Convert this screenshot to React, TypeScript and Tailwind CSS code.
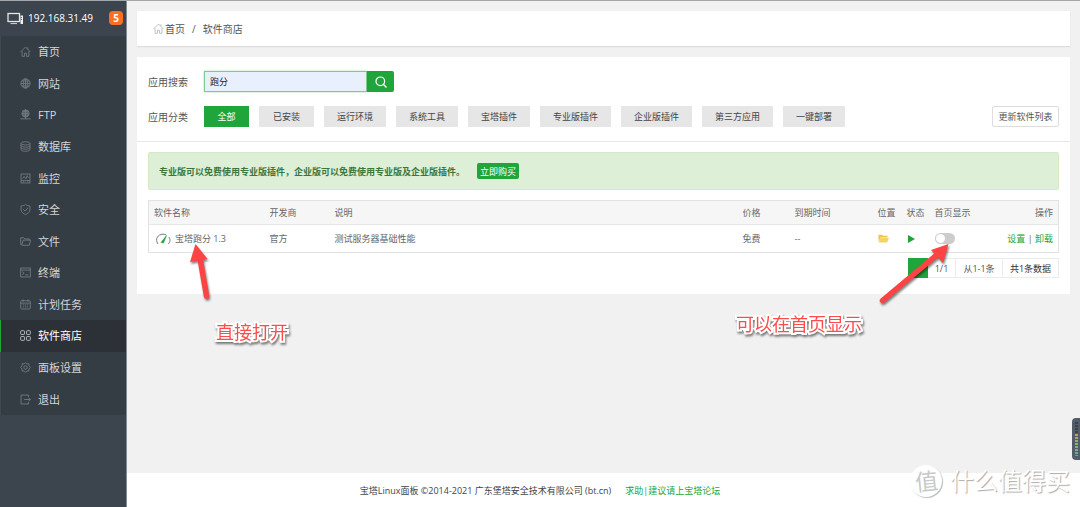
import type { ReactNode } from "react";
import clsx from "clsx";

type MenuItem = {
  label: string;
  icon: ReactNode;
  active?: boolean;
};

const Icon = ({ children }: { children: ReactNode }) => (
  <svg
    viewBox="0 0 16 16"
    className="size-[11px] shrink-0"
    fill="none"
    stroke="currentColor"
    strokeWidth="1.3"
    aria-hidden="true"
  >
    {children}
  </svg>
);

const HomeIcon = () => (
  <Icon>
    <path d="M1 8.5 8 1.5l7 7M11.5 2v3" />
    <path d="M3 7.5V15h3.5v-4.500h3V15H13V7.500" />
  </Icon>
);

const menu: MenuItem[] = [
  { label: "首页", icon: <HomeIcon /> },
  {
    label: "网站",
    icon: (
      <Icon>
        <circle cx="8" cy="8" r="6.700" />
        <ellipse cx="8" cy="8" rx="3.200" ry="6.700" />
        <path d="M1.300 8h13.400M2.500 4.500h11M2.500 11.500h11M8 1.300v13.400" />
      </Icon>
    ),
  },
  {
    label: "FTP",
    icon: (
      <Icon>
        <circle cx="8" cy="6.500" r="5.300" />
        <ellipse cx="8" cy="6.500" rx="2.500" ry="5.300" />
        <path d="M2.700 6.500h10.600M3.500 4h9M3.500 9h9M8 1v13M0.500 14.300h15" />
      </Icon>
    ),
  },
  {
    label: "数据库",
    icon: (
      <Icon>
        <ellipse cx="8" cy="3.500" rx="6.500" ry="2.400" />
        <path d="M1.500 3.500v9c0 3.200 13 3.200 13 0v-9M1.500 6.500c0 3.200 13 3.200 13 0M1.500 9.500c0 3.200 13 3.200 13 0" />
      </Icon>
    ),
  },
  {
    label: "监控",
    icon: (
      <Icon>
        <rect x="1.500" y="1.500" width="13" height="13" />
        <path d="M4 8l2-3 2.500 3.500L10.500 4l2 3M1.500 11h13M4 13h2M10 13h2" />
      </Icon>
    ),
  },
  {
    label: "安全",
    icon: (
      <Icon>
        <path d="M8 .8c2 1.400 4.500 2 6.500 2V8c0 3.500-3 6-6.500 7.300C4.500 14 1.500 11.500 1.500 8V2.800c2 0 4.500-.6 6.500-2z" />
        <path d="m4.500 7.500 2.800 2.800 4.500-4.800" />
      </Icon>
    ),
  },
  {
    label: "文件",
    icon: (
      <Icon>
        <path d="M3 13.500h10.500l2-7.500H4.500L2.500 13.500 1 12V2.500h4.500L7 4.300h6.500V6" />
      </Icon>
    ),
  },
  {
    label: "终端",
    icon: (
      <Icon>
        <rect x="1" y="1.500" width="14" height="13" />
        <path d="M1 4.500h14M3.500 7l2.500 2-2.500 2M7.500 11.500h4.500" />
      </Icon>
    ),
  },
  {
    label: "计划任务",
    icon: (
      <Icon>
        <rect x="1" y="2.500" width="14" height="12" rx="1" />
        <path d="M4.500 .5v3.500M11.500 .5v3.500M1 6h14M4 8.500h2M7 8.500h2M10 8.500h2M4 11.500h2M7 11.500h2M10 11.500h2" />
      </Icon>
    ),
  },
  {
    label: "软件商店",
    active: true,
    icon: (
      <Icon>
        <rect x="1" y="1" width="5.500" height="5.500" rx="1" />
        <rect x="9.500" y="1" width="5.500" height="5.500" rx="1" />
        <rect x="1" y="9.500" width="5.500" height="5.500" rx="1" />
        <rect x="9.500" y="9.500" width="5.500" height="5.500" rx="1" />
      </Icon>
    ),
  },
  {
    label: "面板设置",
    icon: (
      <Icon>
        <path d="M8 1l2 1.800 2.800-.3.200 2.700L15 8l-2 2.200-.2 3-2.800-.3L8 15l-2-2.100-2.800.3-.2-3L1 8l2-2.800.2-2.700 2.800.3z" />
        <circle cx="8" cy="8" r="2.500" />
      </Icon>
    ),
  },
  {
    label: "退出",
    icon: (
      <Icon>
        <path d="M12.500 4.500V1.500h-11v13h11v-3M6 8h9M12.500 5.500 15 8l-2.500 2.500" />
      </Icon>
    ),
  },
];

const categories = [
  { label: "全部", width: "w-[45px]" },
  { label: "已安装", width: "w-[55px]" },
  { label: "运行环境", width: "w-[62px]" },
  { label: "系统工具", width: "w-[62px]" },
  { label: "宝塔插件", width: "w-[62px]" },
  { label: "专业版插件", width: "w-[71px]" },
  { label: "企业版插件", width: "w-[71px]" },
  { label: "第三方应用", width: "w-[71px]" },
  { label: "一键部署", width: "w-[62px]" },
];

const columns = [
  { label: "软件名称", className: "w-[116px]" },
  { label: "开发商", className: "w-[65px]" },
  { label: "说明", className: "" },
  { label: "价格", className: "w-[52px]" },
  { label: "到期时间", className: "w-[83px]" },
  { label: "位置", className: "w-[29px]" },
  { label: "状态", className: "w-[28px]" },
  { label: "首页显示", className: "w-[60px]" },
  { label: "操作", className: "w-[69px] text-right" },
];

const Sidebar = () => (
  <aside className="w-[127px] shrink-0 border-r border-[#868c93] bg-[#3c444d]">
    <div className="flex h-9 items-center pl-[7px] pr-[3px] text-white">
      <svg viewBox="0 0 17 13" className="h-[13px] w-[17px]" aria-hidden="true">
        <rect x="1" y="1.500" width="11.500" height="8" fill="none" stroke="#e4e6e8" strokeWidth="1.300" />
        <path d="M3.500 11.500h6.500" stroke="#c4c8cc" strokeWidth="1.200" />
        <rect x="13.500" y="3.500" width="2.500" height="8.500" fill="#f1f2f3" />
        <path d="M14 5.500h1M14 7.500h1" stroke="#5a626a" />
      </svg>
      <span className="ml-1 text-[10px]">192.168.31.49</span>
      <span className="ml-auto flex h-[14px] w-[14px] items-center justify-center rounded bg-[#fc6d26] text-[10px] font-bold leading-none">
        5
      </span>
    </div>

    <nav className="flex h-[379px] flex-col bg-[#353d44]">
      {menu.map((item) => (
        <a
          key={item.label}
          href="#"
          className={clsx(
            "flex flex-1 items-center gap-[7px] border-l pl-[19px] text-[11px]",
            item.active
              ? "border-[#20a53a] bg-[#2c3138] text-white"
              : "border-[#41484e] text-[#d4d6d8]",
          )}
        >
          <span className={item.active ? "text-[#c5c8ca]" : "text-[#737a80]"}>
            {item.icon}
          </span>
          {item.label}
        </a>
      ))}
    </nav>
  </aside>
);

const Filters = () => (
  <div className="flex flex-col gap-[14px] border-b border-[#e8e8e8] px-[11px] pt-[14px] pb-[14px]">
    <div className="flex h-[21px] items-center">
      <label htmlFor="search" className="w-14 text-[10px] text-[#555]">
        应用搜索
      </label>
      <input
        id="search"
        type="text"
        defaultValue="跑分"
        className="h-[21px] w-[163px] border border-[#7dcb8c] bg-[#e8f0fe] px-[5px] text-[9px] text-[#222] shadow-[0_0_2px_#a6dcb0] outline-none"
      />
      <button
        type="button"
        aria-label="搜索"
        className="flex h-[21px] w-[27px] items-center justify-center rounded-r-xs bg-[#20a53a]"
      >
        <svg viewBox="0 0 12 12" className="size-3" fill="none" stroke="#fff" aria-hidden="true">
          <circle cx="5.300" cy="5.300" r="4.300" strokeWidth="1.200" />
          <path d="m8.500 8.500 3 3" strokeWidth="1.400" />
        </svg>
      </button>
    </div>

    <div className="flex items-center">
      <span className="w-14 shrink-0 text-[10px] text-[#555]">应用分类</span>
      <div className="flex gap-[10px]">
        {categories.map((category, index) => (
          <button
            key={category.label}
            type="button"
            className={clsx(
              "h-[21px] shrink-0 text-[9px]",
              category.width,
              index === 0 ? "bg-[#20a53a] text-white" : "bg-[#e6e6e6] text-[#444]",
            )}
          >
            {category.label}
          </button>
        ))}
      </div>
      <button
        type="button"
        className="ml-auto h-[21px] w-[67px] shrink-0 rounded-xs border border-[#ddd] bg-white text-[9px] text-[#555]"
      >
        更新软件列表
      </button>
    </div>
  </div>
);

const SoftwareTable = () => (
  <table className="w-full table-fixed border border-[#e2e2e2] text-left text-[9px] text-[#666]">
    <thead>
      <tr className="h-6 border-b border-[#e6e6e6] bg-[#f6f6f6]">
        {columns.map((column) => (
          <th
            key={column.label}
            className={clsx("whitespace-nowrap px-[5px] font-normal", column.className)}
          >
            {column.label}
          </th>
        ))}
      </tr>
    </thead>
    <tbody>
      <tr className="h-7">
        <td className="px-[5px]">
          <a href="#" className="flex items-center gap-1">
            <svg viewBox="0 0 16 12" className="ml-px h-3 w-4" fill="none" aria-hidden="true">
              <path d="M3 11C-.5 6 3 1.200 8 1.200c1.200 0 2 .2 3 .7M13.800 4c1.800 2.300 1.500 5-.6 7" stroke="#777" />
              <path d="M6 9.500 11.500 2.500 8.500 10z" fill="#20a53a" stroke="#20a53a" strokeWidth=".6" />
            </svg>
            宝塔跑分 1.3
          </a>
        </td>
        <td className="px-[5px]">官方</td>
        <td className="px-[5px]">测试服务器基础性能</td>
        <td className="px-[5px]">免费</td>
        <td className="px-[5px]">--</td>
        <td className="px-[5px]">
          <button type="button" aria-label="打开目录" className="block">
            <svg viewBox="0 0 11 9" className="h-[9px] w-[11px]" aria-hidden="true">
              <path d="M.5 8V.800h3.500l1 1h4.500v1.700H2.500z" fill="#e8c64a" />
              <path d="M2.500 4h8.500l-2 4.500H.600z" fill="#f2d561" />
            </svg>
          </button>
        </td>
        <td className="px-[5px]">
          <button type="button" aria-label="停止" className="ml-px block">
            <svg viewBox="0 0 7 8" className="h-2 w-[7px]" aria-hidden="true">
              <path d="M0 0 7 4 0 8z" fill="#20a53a" />
            </svg>
          </button>
        </td>
        <td className="px-[5px]">
          <input
            type="checkbox"
            aria-label="首页显示"
            className="block h-[11px] w-5 appearance-none rounded-full bg-[#ccc] p-px before:block before:size-[9px] before:rounded-full before:bg-white checked:bg-[#20a53a] checked:before:ml-[9px]"
          />
        </td>
        <td className="whitespace-nowrap px-[5px] text-right">
          <a href="#" className="text-[#20a53a]">设置</a> |{" "}
          <a href="#" className="text-[#20a53a]">卸载</a>
        </td>
      </tr>
    </tbody>
  </table>
);

const Pagination = () => (
  <div className="mt-[5px] flex h-5 justify-end text-[9px] text-[#555]">
    <button type="button" aria-label="第1页" className="w-5 bg-[#20a53a]" />
    <span className="flex w-7 items-center justify-center border border-l-0 border-[#ececec]">1/1</span>
    <span className="flex w-[46px] items-center justify-center border-y border-[#ececec]">从1-1条</span>
    <span className="flex w-[57px] items-center justify-center border border-[#ececec] text-[#333]">
      共1条数据
    </span>
  </div>
);

const noteText =
  "absolute whitespace-nowrap text-[18px] leading-6 text-[#ff4b4b] [paint-order:stroke_fill] [-webkit-text-stroke:4px_#fff] drop-shadow-[1px_2px_1px_rgba(0,0,0,0.5)]";

const Annotations = () => (
  <div className="pointer-events-none absolute inset-0 overflow-hidden">
    <svg
      viewBox="0 0 30 62"
      className="absolute left-[185px] top-[240px] h-[62px] w-[30px] drop-shadow-[1px_2px_1px_rgba(0,0,0,0.5)]"
      aria-hidden="true"
    >
      <path d="M15 18 21.500 56" stroke="#fd4343" strokeWidth="5.500" strokeLinecap="round" />
      <path d="M10.500 4 22.500 19 5 22z" fill="#fd4343" />
    </svg>
    <p className={clsx(noteText, "left-[216px] top-[320px]")}>直接打开</p>

    <svg
      viewBox="0 0 76 66"
      className="absolute right-[126px] top-[240px] h-[66px] w-[76px] drop-shadow-[1px_2px_1px_rgba(0,0,0,0.5)]"
      aria-hidden="true"
    >
      <path d="M4.500 60.500 61 13" stroke="#fd4343" strokeWidth="5.500" strokeLinecap="round" />
      <path d="M70.500 4 53 10 65 23z" fill="#fd4343" />
    </svg>
    <p className={clsx(noteText, "right-[218px] top-[312px]")}>可以在首页显示</p>

    <div className="absolute right-0 top-[418px] flex h-[42px] w-2 justify-center rounded-l-sm bg-[#535c69] py-1">
      <div className="w-[3px] bg-[repeating-linear-gradient(to_bottom,transparent_0_2px,#535c69_2px_3px),linear-gradient(to_bottom,#3b424c_0_35%,#b6a64b_36%,#8fb565_65%,#3cb9a4)]" />
    </div>

    <div className="absolute bottom-[10px] right-[10px] flex items-center gap-2">
      <span className="flex size-8 items-center justify-center rounded-full bg-white text-[23px] leading-none text-[#c9c9c9] shadow-[1px_1px_1px_#bbb]">
        <span className="-rotate-6">值</span>
      </span>
      <span className="whitespace-nowrap text-[24px] leading-8 text-white [text-shadow:1px_1px_1px_#aaa]">
        什么值得买
      </span>
    </div>
  </div>
);

export default function App() {
  return (
    <div className="relative flex min-h-screen bg-[#f1f1f1] font-['Open_Sans','Noto_Sans_CJK_SC',sans-serif] leading-none">
      <Sidebar />

      <div className="flex min-w-0 flex-1 flex-col">
        <main className="flex-1 px-[10px] pt-[11px]">
          <nav className="flex h-[35px] items-center bg-white pl-4 text-[10px] text-[#555] shadow-[0_1px_1px_#ddd]">
            <span className="text-[#bbb]">
              <HomeIcon />
            </span>
            <a href="#" className="ml-px">首页</a>
            <span className="mx-[7px]">/</span>
            <span>软件商店</span>
          </nav>

          <section className="mt-[11px] bg-white">
            <Filters />
            <div className="px-[11px] pt-[10px] pb-4">
              <div className="mb-[10px] flex h-[38px] items-center rounded-xs border border-[#d6e9c6] bg-[#ddefd7] px-[10px] text-[9px] font-bold text-[#3c763d]">
                专业版可以免费使用专业版插件，企业版可以免费使用专业版及企业版插件。
                <button
                  type="button"
                  className="ml-3 h-4 w-[42px] rounded-xs bg-[#20a53a] text-[9px] font-normal text-white"
                >
                  立即购买
                </button>
              </div>
              <SoftwareTable />
              <Pagination />
            </div>
          </section>
        </main>

        {/* centred on the whole window, not on the content column */}
        <footer className="flex h-[34px] items-center justify-center gap-[14px] bg-white pr-[127px] text-[9px] text-[#444]">
          <span>宝塔Linux面板 ©2014-2021 广东堡塔安全技术有限公司 (bt.cn)</span>
          <a href="#" className="text-[#20a53a]">求助|建议请上宝塔论坛</a>
        </footer>
      </div>

      <Annotations />
      <div className="absolute inset-x-0 top-0 h-px bg-[#a4a7aa]" />
    </div>
  );
}
